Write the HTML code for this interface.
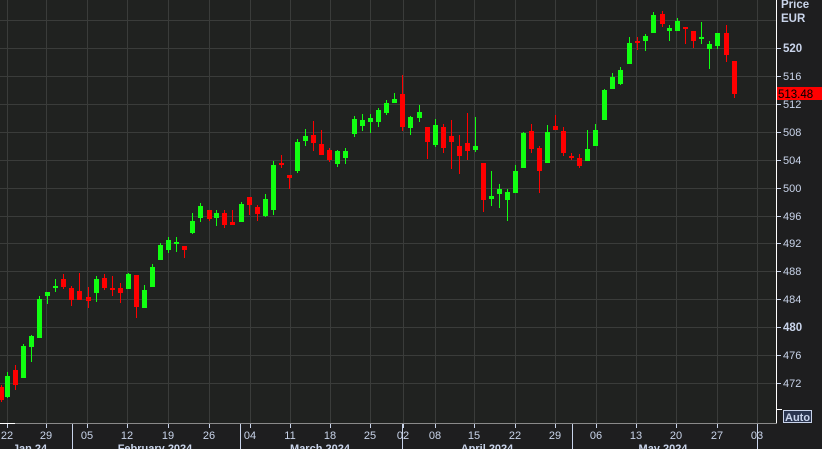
<!DOCTYPE html>
<html><head><meta charset="utf-8"><style>
html,body{margin:0;padding:0;background:#1e1e1f;width:822px;height:449px;overflow:hidden}
svg{display:block}
text{font-family:"Liberation Sans",sans-serif;font-size:11px;fill:#c9d4ea}
text.blk{fill:#000 !important}
</style></head><body>
<svg width="822" height="449" viewBox="0 0 822 449">
<rect x="0" y="0" width="822" height="449" fill="#1e1e1f"/>
<rect x="0" y="0" width="777" height="423" fill="#202220"/>
<g id="grid" stroke="#3a3c3a" stroke-width="1"></g>
<g id="c"></g>
<line x1="0" y1="423.5" x2="777" y2="423.5" stroke="#8a8a8a"/>
<line x1="0" y1="423.5" x2="15" y2="423.5" stroke="#ffffff"/>
<line x1="776.5" y1="0" x2="776.5" y2="423" stroke="#ffffff"/>
<line x1="776" y1="409.5" x2="782" y2="409.5" stroke="#ffffff"/>
<g id="ax"></g>
<text x="781" y="8" style="font-weight:bold;font-size:11.5px">Price</text>
<text x="781" y="22" style="font-weight:bold;font-size:11.5px">EUR</text>
<rect x="777" y="87" width="45" height="13" fill="#ff0000"/>
<text class="blk" x="778" y="98" fill="#000" style="font-size:11.5px">513.48</text>
<rect x="783.5" y="410.5" width="28" height="12" fill="#2b3650" stroke="#c9d4ea"/>
<text x="785" y="421" style="font-weight:bold">Auto</text>
</svg>
<script>
var ns="http://www.w3.org/2000/svg";
function el(p,t,a,txt){var e=document.createElementNS(ns,t);for(var k in a)e.setAttribute(k,a[k]);if(txt)e.textContent=txt;p.appendChild(e);return e;}
var g=document.getElementById('grid'),c=document.getElementById('c'),ax=document.getElementById('ax');
var vx=[7,46,87,127,168,209,250,290,330,370,403,435,474,515,555,596,636,676,717,757];
var lb=["22","29","05","12","19","26","04","11","18","25","02","08","15","22","29","06","13","20","27","03"];
vx.forEach(function(x,i){el(g,'line',{x1:x+.5,y1:0,x2:x+.5,y2:423});
el(ax,'line',{x1:x+.5,y1:424,x2:x+.5,y2:428,stroke:'#c9d4ea'});
el(ax,'text',{x:x,y:439,'text-anchor':'middle'},lb[i]);});
for(var p=472;p<=524;p+=4){var y=Math.round(48+(520-p)*6.98);el(g,'line',{x1:0,y1:y+.5,x2:777,y2:y+.5});
if(p<=520){el(ax,'line',{x1:777,y1:y+.5,x2:781,y2:y+.5,stroke:'#c9d4ea'});
var t=el(ax,'text',{x:783,y:y+4},String(p));if(p==480||p==520)t.setAttribute('style','font-weight:bold;font-size:11.5px');}}
[72,240,402,572,757].forEach(function(x){el(ax,'line',{x1:x+.5,y1:424,x2:x+.5,y2:449,stroke:'#c9d4ea'});});
[["Jan 24",30],["February 2024",155],["March 2024",320],["April 2024",487],["May 2024",663]].forEach(function(m){el(ax,'text',{x:m[1],y:452,'text-anchor':'middle',style:'font-weight:bold'},m[0]);});
var d=[
[1,'r',385,387,400,402],[6.5,'g',372,376,397,398],[14.5,'r',365,370,385,390],[22.5,'g',344,346,378,378],[30.5,'g',335,336,347,362],[38.5,'g',296,299,338,338],[46.5,'g',292,292,296,304],[55,'g',279,286,288,292],[63,'r',274,279,287,289],[71,'r',286,288,300,306],[79,'r',273,291,300,300],[87.5,'r',287,297,301,308],[95.5,'g',276,279,293,302],[103.5,'r',274,278,288,290],[111.5,'r',276,288,290,296],[119.5,'r',283,288,293,303],[127.5,'g',273,274,289,289],[135.5,'r',275,275,307,318],[143.5,'g',285,290,308,308],[151.5,'g',264,267,287,287],[159.5,'g',243,245,260,260],[168,'g',237,240,250,253],[176,'g',237,242,244,252],[184,'r',246,246,250,258],[192,'g',213,221,233,234],
[200,'g',203,206,218,222],[208.5,'r',210,210,219,221],[216,'g',210,213,218,226],[224,'r',210,213,225,228],[232,'r',210,222,225,225],[240.5,'g',202,204,222,222],[248.5,'r',197,197,205,215],[256.5,'r',205,207,214,221],[264.5,'g',194,199,216,217],[272.5,'g',161,165,210,215],[281,'r',155,163,165,168],[289,'r',175,175,178,189],[297,'g',139,142,171,173],[305,'g',129,136,141,146],[313,'r',121,135,143,151],[321,'r',130,144,155,155],[329,'r',148,150,160,162],[337,'g',150,151,164,167],[345,'g',148,151,158,164],[353.5,'g',116,119,134,137],[361.5,'g',114,120,126,131],[369.5,'g',114,118,122,133],[377.5,'g',108,110,122,127],[385.5,'g',100,103,113,115],[393.5,'g',93,99,103,103],[401.5,'r',75,94,127,131],
[410,'g',116,117,128,135],[418.5,'g',105,112,118,122],[427,'r',127,127,142,159],[434.5,'g',119,125,145,147],[442.5,'r',124,127,148,153],[450.5,'r',120,136,142,169],[458.5,'r',135,146,156,174],[466.5,'r',113,143,151,160],[474.5,'g',117,146,150,152],[482.5,'r',163,163,200,212],[490.5,'g',171,196,199,206],[498.5,'g',184,189,194,208],[506.5,'g',189,192,200,221],[514.5,'g',165,171,193,193],[522.5,'g',132,133,168,168],[530.5,'r',124,131,149,153],[538.5,'r',146,148,171,193],[546.5,'g',125,132,163,163],[554.5,'r',115,126,130,130],[562.5,'r',127,131,153,156],[571,'r',153,156,158,160],[578.5,'r',154,158,166,168],[586.5,'g',130,149,161,161],[594.5,'g',124,130,146,146],[603.5,'g',89,90,120,120],
[612,'g',73,77,89,89],[620,'g',67,70,84,85],[628.5,'g',37,43,64,64],[637,'r',37,41,43,50],[645,'g',34,36,41,51],[653,'g',12,15,33,33],[661.5,'r',11,14,24,27],[669,'g',25,28,31,41],[677,'g',18,21,31,31],[685,'r',27,27,29,44],[693,'r',31,31,41,48],[701,'g',22,37,39,44],[709,'g',41,44,49,69],[717,'g',33,33,46,49],[725.5,'r',25,33,55,62],[733.5,'r',61,61,94,98]];
d.forEach(function(k){var col=k[1]=='g'?'#11ff11':'#ff0000';var x=Math.round(k[0]);
el(c,'rect',{x:x,y:k[2],width:1,height:k[5]-k[2],fill:col});
var h=Math.max(2,k[4]-k[3]);el(c,'rect',{x:x-2,y:k[3],width:5,height:h,fill:col});});
</script>
</body></html>
